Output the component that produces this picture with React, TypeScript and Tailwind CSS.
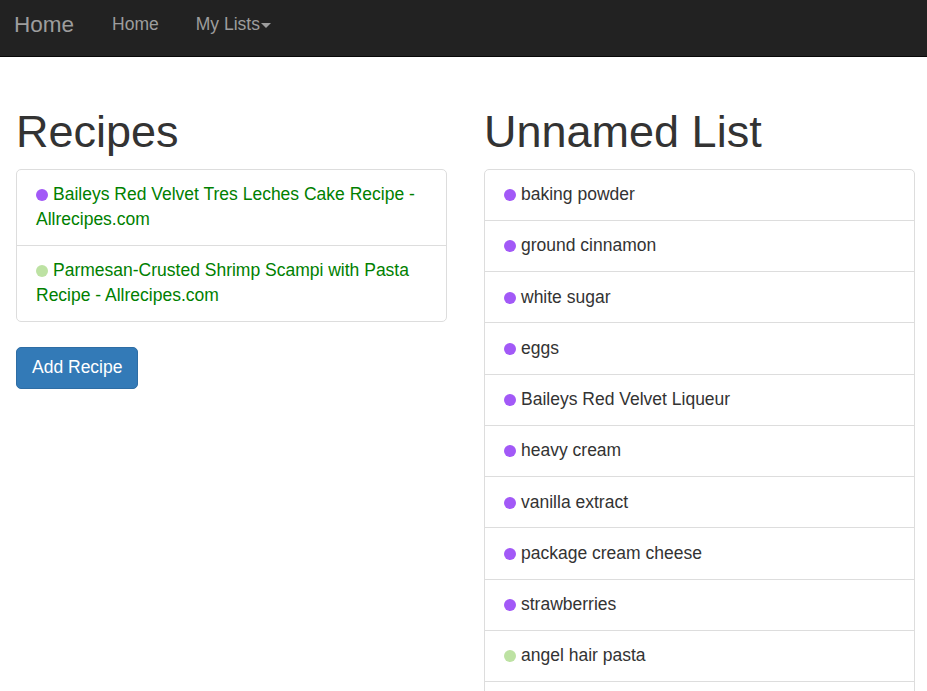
const RECIPES = [
  { title: 'Baileys Red Velvet Tres Leches Cake Recipe - Allrecipes.com', dot: 'bg-[#a259f7]' },
  { title: 'Parmesan-Crusted Shrimp Scampi with Pasta Recipe - Allrecipes.com', dot: 'bg-[#bde2a3]' },
];

const ITEMS = [
  { name: 'baking powder', dot: 'bg-[#a259f7]' },
  { name: 'ground cinnamon', dot: 'bg-[#a259f7]' },
  { name: 'white sugar', dot: 'bg-[#a259f7]' },
  { name: 'eggs', dot: 'bg-[#a259f7]' },
  { name: 'Baileys Red Velvet Liqueur', dot: 'bg-[#a259f7]' },
  { name: 'heavy cream', dot: 'bg-[#a259f7]' },
  { name: 'vanilla extract', dot: 'bg-[#a259f7]' },
  { name: 'package cream cheese', dot: 'bg-[#a259f7]' },
  { name: 'strawberries', dot: 'bg-[#a259f7]' },
  { name: 'angel hair pasta', dot: 'bg-[#bde2a3]' },
  { name: 'butter', dot: 'bg-[#bde2a3]' },
  { name: 'garlic', dot: 'bg-[#bde2a3]' },
];

function Dot({ className }: { className: string }) {
  return <span className={`inline-block w-[12px] h-[12px] rounded-full align-[-1px] mr-[5px] ${className}`} />;
}

export default function App() {
  return (
    <div className="min-h-screen bg-white text-[#333] text-[17.5px] leading-[25px] font-['Liberation_Sans',Arial,sans-serif]">
      {/* Navbar */}
      <nav className="h-[57px] bg-[#222] border-b border-[#080808] flex items-center">
        <a className="ml-[14px] text-[22.5px] text-[#9d9d9d] -mt-[8px]">Home</a>
        <a className="ml-[38px] text-[17.5px] text-[#9d9d9d] -mt-[8px]">Home</a>
        <a className="ml-[37px] text-[17.5px] text-[#9d9d9d] -mt-[8px] flex items-center">
          My Lists
          <span className="ml-[1px] mt-[2px] w-0 h-0 border-l-[5px] border-r-[5px] border-t-[5px] border-l-transparent border-r-transparent border-t-[#9d9d9d]" />
        </a>
      </nav>

      <div className="flex gap-[37px] pl-[16px] pr-[12px]">
        {/* Recipes */}
        <div className="flex-1">
          <h1 className="mt-[50px] mb-[12px] text-[45px] leading-[49.5px] font-normal">Recipes</h1>
          <div className="border border-[#ddd] rounded-[5px]">
            {RECIPES.map((r, i) => (
              <div key={i} className={`px-[19px] py-[12.5px] ${i > 0 ? 'border-t border-[#ddd]' : ''}`}>
                <Dot className={r.dot} />
                <a className="text-[#008000]">{r.title}</a>
              </div>
            ))}
          </div>
          <button className="mt-[25px] bg-[#337ab7] border border-[#2e6da4] text-white rounded-[5px] px-[15px] py-[7.5px] leading-[25px]">
            Add Recipe
          </button>
        </div>

        {/* Unnamed List */}
        <div className="flex-1">
          <h1 className="mt-[50px] mb-[12px] text-[45px] leading-[49.5px] font-normal">Unnamed List</h1>
          <div className="border border-[#ddd] rounded-[5px]">
            {ITEMS.map((it, i) => (
              <div key={i} className={`px-[19px] py-[12.625px] ${i > 0 ? 'border-t border-[#ddd]' : ''}`}>
                <Dot className={it.dot} />
                {it.name}
              </div>
            ))}
          </div>
        </div>
      </div>
    </div>
  );
}
